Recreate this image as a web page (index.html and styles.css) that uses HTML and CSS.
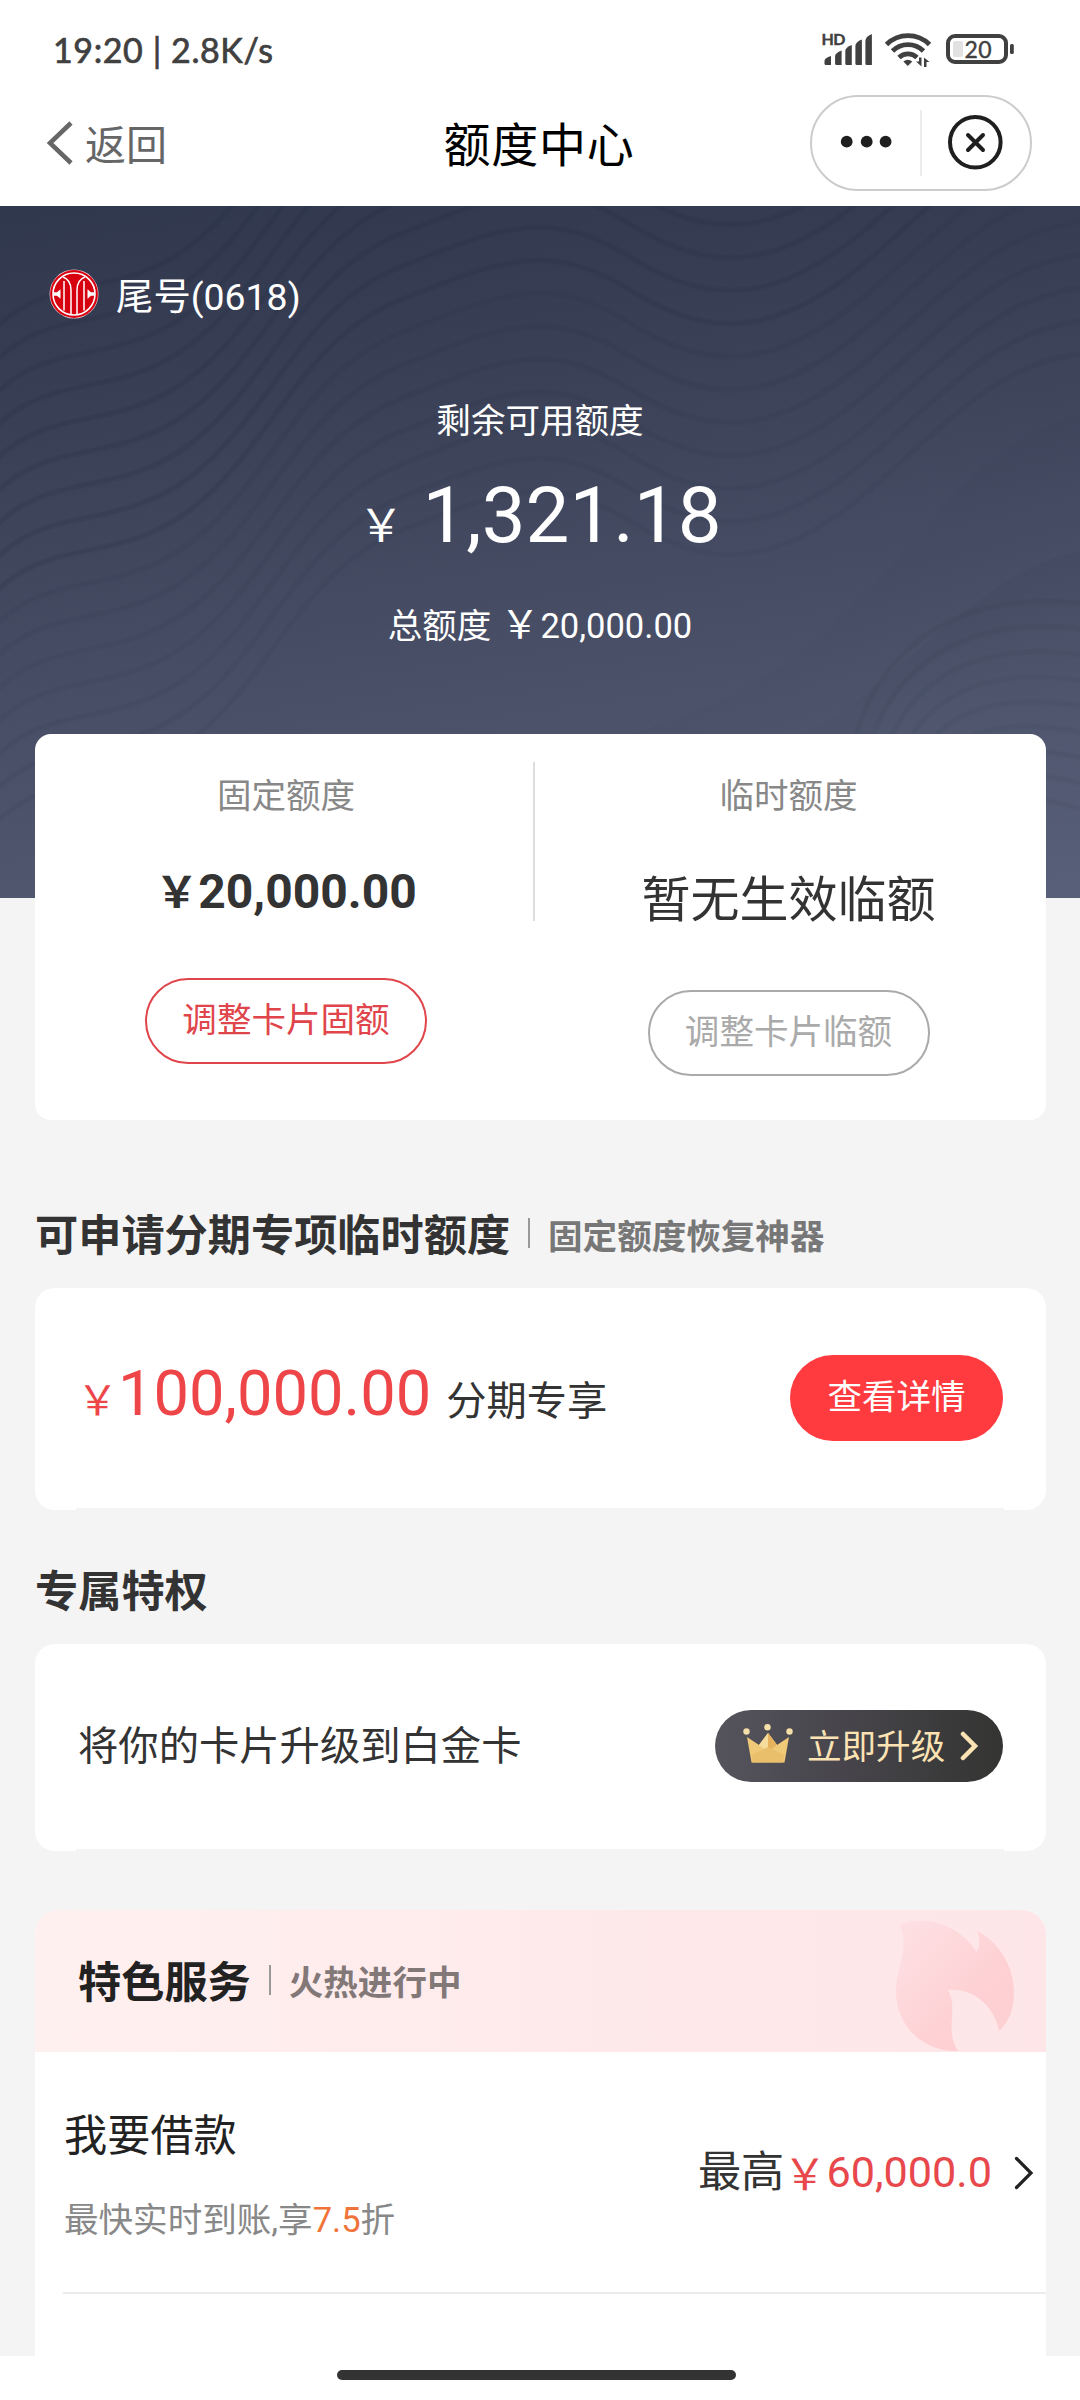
FILE: index.html
```html
<!DOCTYPE html>
<html lang="zh-CN">
<head>
<meta charset="utf-8">
<title>额度中心</title>
<link rel="stylesheet" href="styles.css">
</head>
<body>
<div class="screen">
  <header class="top">
    <div class="status">
      <span class="status-text">19:20 | 2.8K/s</span>
      <svg class="status-icons" width="210" height="52" viewBox="815 24 210 52">
        <text class="hd" x="821.5" y="45" textLength="24">HD</text>
        <g fill="#404040">
          <path d="M824.500 61q0-3 6.500-5v9h-5q-1.500 0-1.500-1.500z"/>
          <path d="M835.100 56q0-3 6.500-5.500v14.500h-5q-1.500 0-1.500-1.500z"/>
          <path d="M845.300 51q0-3.500 6.500-6v20h-5q-1.500 0-1.500-1.500z"/>
          <path d="M855.400 46q0-4 6.500-6.500v25.500h-5q-1.500 0-1.500-1.500z"/>
          <path d="M865.400 41q0-4.500 6.500-7v31h-5q-1.500 0-1.500-1.500z"/>
          <path d="M907.800 66l-4.500-4.500q4.500-3.500 9 0z"/>
          <path d="M921.500 57.500v9l-5.500-5h3v-4zM924 67v-9.500l5.500 4.500h-3v5z"/>
          <rect x="1010" y="44" width="3.800" height="10" rx="1.500"/>
        </g>
        <g fill="none" stroke="#404040" stroke-width="4.800">
          <path d="M886.500 44.500a30.500 30.500 0 0 1 43 0"/>
          <path d="M892.500 51a22 22 0 0 1 31 0"/>
          <path d="M899 57.500a13 13 0 0 1 18 0"/>
          <rect x="948" y="36" width="58" height="26" rx="7" stroke-width="4"/>
        </g>
        <rect x="953" y="41" width="10" height="16" rx="2" fill="#e2e2e2"/>
        <text class="battery" x="964.500" y="58" textLength="27">20</text>
      </svg>
    </div>
    <nav class="nav">
      <div class="back">
        <svg width="28" height="44" viewBox="0 0 28 44"><path d="M25 2L4 22l21 20" fill="none" stroke="#666" stroke-width="4.500"/></svg>
        <span>返回</span>
      </div>
      <h1 class="title">额度中心</h1>
      <div class="capsule">
        <svg width="108" height="92" viewBox="812 97 108 92"><g fill="#1f1f1f"><circle cx="846.700" cy="141.700" r="5.900"/><circle cx="866.700" cy="141.700" r="5.900"/><circle cx="885.600" cy="141.700" r="5.900"/></g></svg>
        <i class="capsule-line"></i>
        <svg width="108" height="92" viewBox="922 97 108 92"><g fill="none" stroke="#1f1f1f" stroke-width="4" stroke-linecap="round"><circle cx="975.300" cy="142.300" r="25.300"/><path d="M968 135l15 15M983 135l-15 15"/></g></svg>
      </div>
    </nav>
  </header>

  <section class="hero">
    <svg class="waves" width="1080" height="692" viewBox="0 0 1080 692">
      <defs>
        <linearGradient id="ridge" x1="0" y1="0" x2="1" y2="1"><stop offset="0" stop-color="#2f364e" stop-opacity=".5"/><stop offset=".7" stop-color="#2f364e" stop-opacity="0"/></linearGradient>
        <linearGradient id="hill" x1="0" y1="0" x2="0" y2="1"><stop offset="0" stop-color="#666e8c" stop-opacity="0"/><stop offset="1" stop-color="#666e8c" stop-opacity=".15"/></linearGradient>
      </defs>
      <path d="M1080 208C980 230 930 330 820 430C770 475 700 510 620 530H1080z" fill="url(#ridge)" opacity=".5"/>
      <path d="M1080 345C1000 360 940 430 850 500C790 545 700 560 640 570H1080z" fill="url(#ridge)" opacity=".7"/>
      <path d="M840 692C835 520 920 420 1080 400V692z" fill="url(#hill)"/>
      <g id="wave-lines" fill="none" stroke="#262d43"></g>
    </svg>
    <div class="account">
      <svg width="50" height="50" viewBox="0 0 50 50">
        <circle cx="25" cy="25" r="24.500" fill="#e3c5ce"/><circle cx="25" cy="25" r="23.900" fill="#d7000f"/><circle cx="25" cy="25" r="21" fill="none" stroke="#fff" stroke-width="1.600"/>
        <path d="M14 8q8 3 8 13v24M36 8q-8 3-8 13v24" fill="none" stroke="#fff" stroke-width="1.500"/>
        <path d="M15 12v29.500M35 12v29.500" stroke="#fff" stroke-width="1.500"/>
        <path d="M4.500 23.300H8l3.500-3v9.400l-3.500-3H4.500zM45.500 23.300H42l-3.500-3v9.400l3.500-3h3.500z" fill="#fff"/>
      </svg>
      <span>尾号(0618)</span>
    </div>
    <div class="available-label">剩余可用额度</div>
    <div class="available"><span class="yen">￥</span><span>1,321.18</span></div>
    <div class="total"><span>总额度</span><span class="yen">￥</span><span>20,000.00</span></div>
  </section>

  <main class="content">
    <section class="card limits">
      <div class="limit fixed">
        <div class="limit-name">固定额度</div>
        <div class="limit-value"><span class="yen">￥</span>20,000.00</div>
        <div class="outline-btn red">调整卡片固额</div>
      </div>
      <i class="limit-line"></i>
      <div class="limit temp">
        <div class="limit-name">临时额度</div>
        <div class="limit-none">暂无生效临额</div>
        <div class="outline-btn gray">调整卡片临额</div>
      </div>
    </section>

    <div class="heading first"><h2>可申请分期专项临时额度</h2><i></i><span>固定额度恢复神器</span></div>
    <section class="card notched instalment">
      <div class="instalment-amount"><span class="yen">￥</span><b>100,000.00</b><span class="tag">分期专享</span></div>
      <div class="solid-btn">查看详情</div>
    </section>

    <div class="heading second"><h2>专属特权</h2></div>
    <section class="card notched upgrade">
      <div class="upgrade-text">将你的卡片升级到白金卡</div>
      <div class="upgrade-btn">
        <svg width="50" height="42" viewBox="0 0 50 42">
          <path d="M4 14l12 8 9-12 9 12 12-8-4.500 25.500h-33z" fill="#efc878"/>
          <path d="M25 10l9 12-9 7-9-7z" fill="#f5dc9c"/><path d="M25 10l9 12-9 7z" fill="#e6b35c"/>
          <path d="M9 32l16-8 16 8-1 7.500H9.500z" fill="#e9bf6b"/>
          <g fill="#f5dfa9"><circle cx="3.500" cy="8.500" r="3.200"/><circle cx="24.500" cy="4.200" r="3.200"/><circle cx="46.500" cy="8.500" r="3.200"/></g>
        </svg>
        <span>立即升级</span>
        <svg width="20" height="30" viewBox="0 0 20 30"><path d="M3 3l12 12L3 27" fill="none" stroke="#fbe3b4" stroke-width="4.500" stroke-linecap="round"/></svg>
      </div>
    </section>

    <section class="services">
      <div class="services-head">
        <div class="heading"><h2>特色服务</h2><i></i><span>火热进行中</span></div>
        <svg class="flame" width="120" height="134" viewBox="895 1919 120 134">
          <defs><linearGradient id="flame" x1="0" y1="0" x2="1" y2="1"><stop offset="0" stop-color="#fde1e4"/><stop offset=".65" stop-color="#fed0d3"/><stop offset="1" stop-color="#fdd0d2"/></linearGradient></defs>
          <path d="M900 1924C928 1915 958 1924 977 1952C980 1946 980 1938 977 1931C998 1941 1014 1966 1014 1992C1014 2008 1009 2022 999 2031C995 2008 975 1988 948 1990C959 2008 944 2030 958 2051C920 2052 896 2023 896 1992C896 1966 910 1951 900 1924z" fill="url(#flame)"/>
        </svg>
      </div>
      <div class="loan">
        <div class="loan-info">
          <div class="loan-name">我要借款</div>
          <div class="loan-note">最快实时到账,享<em>7.5</em>折</div>
        </div>
        <div class="loan-max"><span>最高</span><span class="yen">￥</span><span class="loan-sum">60,000.0</span>
          <svg width="20" height="34" viewBox="0 0 20 34"><path d="M2.500 2.500L17 17 2.500 31.500" fill="none" stroke="#222" stroke-width="3.200" stroke-linecap="round"/></svg>
        </div>
      </div>
    </section>
  </main>
  <footer class="home"><i></i></footer>
</div>
<script src="waves.js"></script>
</body>
</html>
```
FILE: styles.css
```css
* { box-sizing: border-box; margin: 0; padding: 0; }
body { background: #f4f4f4; }
svg { display: block; flex: none; }
i, em { font-style: normal; }
.screen { width: 1080px; height: 2400px; overflow: hidden; display: flex; flex-direction: column; font-family: Roboto, "Noto Sans CJK SC", sans-serif; font-size: 34.56px; line-height: 1; color: #333; background: #f4f4f4; white-space: nowrap; }
.yen { font-family: "Noto Sans CJK SC", sans-serif; }

.top { height: 206px; flex: none; background: #fff; }
.status { height: 95px; display: flex; justify-content: space-between; padding: 24px 55px 0 53px; }
.status-text { font-family: Lato, sans-serif; font-size: 34px; line-height: 52px; letter-spacing: .6px; color: #404040; -webkit-text-stroke: .7px #404040; }
.hd { font: 700 16px Lato, sans-serif; fill: #404040; stroke: #404040; stroke-width: .4px; }
.battery { font: 400 23px Lato, sans-serif; fill: #404040; stroke: #404040; stroke-width: .4px; }
.nav { height: 96px; display: grid; grid-template-columns: 1fr auto 1fr; align-items: center; padding: 0 48px 0 46px; }
.back { display: flex; align-items: center; gap: 11px; font-size: 41px; color: #666; }
.back span { padding-top: 6px; }
.title { font-weight: 400; font-size: 47px; letter-spacing: .7px; color: #000; padding-top: 5px; }
.capsule { justify-self: end; width: 222px; height: 96px; display: flex; align-items: center; border: 2px solid #ccc; border-radius: 48px; }
.capsule-line { width: 2px; height: 66px; background: #ececec; }

.hero { position: relative; flex: none; height: 692px; background: linear-gradient(172deg, #30384e 0%, #3a4056 28%, #474d64 58%, #565d76 100%); color: #fff; display: flex; flex-direction: column; align-items: center; }
.waves { position: absolute; left: 0; top: 0; }
.account, .available-label, .available, .total { position: relative; }
.account { align-self: flex-start; display: flex; align-items: center; gap: 17px; height: 50px; margin: 63px 0 0 49px; font-size: 37.4px; }
.account span { padding-top: 8px; }
.available-label { margin-top: 85px; }
.available { display: flex; align-items: baseline; margin-top: 38px; font-size: 78px; height: 78px; line-height: 78px; }
.available .yen { font-size: 45px; margin-right: 19px; }
.total { display: flex; align-items: baseline; margin-top: 49px; }
.total .yen { font-size: 39px; line-height: 34px; margin: 0 1px 0 9px; }

.content { flex: none; height: 1458px; padding: 0 34px 0 35px; }
.card { position: relative; background: #fff; border-radius: 20px; }
.notched::after { content: ""; position: absolute; left: 41px; right: 42px; bottom: 0; height: 2px; background: #f4f4f4; }
.limits { height: 386px; margin-top: -164px; display: flex; align-items: flex-start; border-radius: 16px; }
.limit { display: flex; flex-direction: column; align-items: center; padding-top: 45px; }
.fixed { width: 498px; padding-left: 4px; }
.temp { flex: 1; padding-right: 4px; }
.limit-line { width: 2px; height: 159px; margin-top: 28px; background: #ddd; }
.limit-name { color: #888; }
.limit-value { margin-top: 54px; font-size: 48px; font-weight: 700; height: 48px; }
.limit-value .yen { font-size: 43px; line-height: 40px; }
.limit-none { margin-top: 62px; font-size: 49px; }
.outline-btn { width: 282px; height: 86px; border: 2px solid; border-radius: 43px; text-align: center; line-height: 80px; }
.outline-btn.red { color: #e0454b; margin-top: 62px; }
.outline-btn.gray { color: #aaa; margin-top: 65px; }

.heading { display: flex; align-items: center; }
.heading h2 { font-size: 43.200px; font-weight: 700; }
.heading i { width: 2px; height: 30px; background: #999; margin: -8px 18px 0; }
.heading span { color: #777; font-weight: 700; }
.first { height: 168px; padding-top: 66px; }
.instalment { height: 222px; display: flex; justify-content: space-between; align-items: flex-start; padding: 67px 43px 0 42px; }
.instalment-amount { display: flex; align-items: baseline; margin-top: 7px; color: #ee4549; }
.instalment-amount .yen { font-size: 41px; }
.instalment-amount b { font-size: 63.200px; font-weight: 400; }
.tag { font-size: 40.300px; margin-left: 15px; color: #333; }
.solid-btn { width: 213px; height: 86px; border-radius: 43px; background: #ff3b3f; color: #fff; text-align: center; line-height: 84px; }
.second { height: 134px; padding-top: 31px; }
.upgrade { height: 207px; display: flex; justify-content: space-between; align-items: flex-start; padding: 66px 43px 0 43px; }
.upgrade-text { font-size: 40.320px; line-height: 73px; }
.upgrade-btn { width: 288px; height: 72px; border-radius: 36px; background: linear-gradient(90deg, #55535c 0%, #47454b 45%, #343432 100%); display: flex; align-items: center; padding-left: 28px; color: #fbe3b4; }
.upgrade-btn span { margin: 2px 15px 0 14px; }
.upgrade-btn svg:first-child { margin-top: -4px; }

.services { height: 446px; margin-top: 59px; background: #fff; border-radius: 24px 24px 0 0; overflow: hidden; }
.services-head { height: 142px; display: flex; justify-content: space-between; padding: 9px 31px 0 43px; background: linear-gradient(90deg, #fff0f0, #fee9ea 60%, #fee6e8); }
.services-head .heading { height: 129px; }
.services-head h2 { color: #222; }
.services-head .heading span { color: #837878; }
.loan { height: 242px; margin-left: 28px; border-bottom: 2px solid #ececec; display: flex; justify-content: space-between; padding: 63px 12px 0 1px; }
.loan-name { font-size: 43.200px; color: #222; }
.loan-note { margin-top: 45px; color: #888; }
.loan-note em { color: #f0743a; }
.loan-max { display: flex; align-items: center; height: 115px; font-size: 43.200px; }
.loan-max .yen, .loan-sum { color: #e8474c; }
.loan-max .yen { margin: -2px 0 0 -1px; }
.loan-max svg { margin-left: 22px; }
.home { height: 44px; flex: none; background: #fff; padding: 14px 0 0 337px; }
.home i { display: block; width: 399px; height: 10px; border-radius: 5px; background: #333; }
```
FILE: waves.js
```js
// Contour lines of the hero background: flowing curves, spaced evenly.
const group = document.getElementById('wave-lines');
function line(d, opacity) {
  // A wide faint stroke under a narrow one gives each contour a soft edge.
  for (const width of [6, 3]) {
    const p = document.createElementNS('http://www.w3.org/2000/svg', 'path');
    p.setAttribute('d', d);
    p.setAttribute('stroke-width', width);
    p.setAttribute('opacity', opacity);
    group.appendChild(p);
  }
}
for (let k = 0; k < 16; k++) {
  const y = k * 33 - 110;
  line(`M-20 ${y + 250}C40 ${y + 170} 110 ${y + 210} 190 ${y + 150}S300 ${y - 20} 400 ${y - 60}S550 ${y - 120} 630 ${y - 70}S780 ${y - 20} 880 ${y - 110}S1010 ${y - 230} 1100 ${y - 240}`, k < 9 ? 0.09 : 0.04);
}
for (let k = 0; k < 9; k++) {
  const t = k * 26;
  line(`M${850 + k * 14} 600C${840 + k * 18} ${480 + t / 2} ${930 + k * 8} ${370 + t} 1100 ${400 + t}`, 0.035);
}
```
